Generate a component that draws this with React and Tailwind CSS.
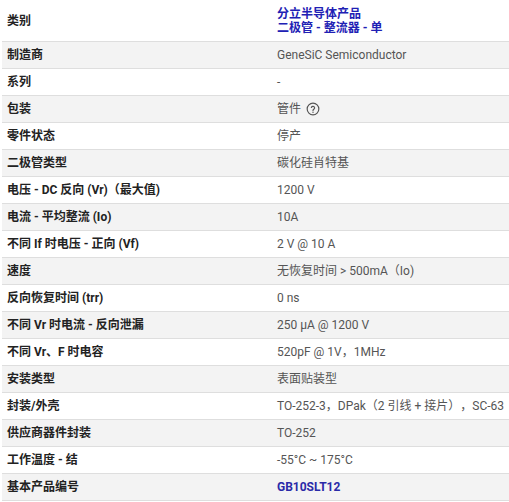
import React from 'react';

const rows = [
  { label: '制造商', value: 'GeneSiC Semiconductor' },
  { label: '系列', value: '-' },
  { label: '包装', value: '管件', help: true },
  { label: '零件状态', value: '停产' },
  { label: '二极管类型', value: '碳化硅肖特基' },
  { label: '电压 - DC 反向 (Vr)（最大值)', value: '1200 V' },
  { label: '电流 - 平均整流 (Io)', value: '10A' },
  { label: '不同 If 时电压 - 正向 (Vf)', value: '2 V @ 10 A' },
  { label: '速度', value: '无恢复时间 > 500mA（Io)' },
  { label: '反向恢复时间 (trr)', value: '0 ns' },
  { label: '不同 Vr 时电流 - 反向泄漏', value: '250 µA @ 1200 V' },
  { label: '不同 Vr、F 时电容', value: '520pF @ 1V，1MHz' },
  { label: '安装类型', value: '表面贴装型' },
  { label: '封装/外壳', value: 'TO-252-3，DPak（2 引线 + 接片），SC-63' },
  { label: '供应商器件封装', value: 'TO-252' },
  { label: '工作温度 - 结', value: '-55°C ~ 175°C' },
  { label: '基本产品编号', value: 'GB10SLT12', link: true },
];

const HelpIcon = () => (
  <svg width="14" height="14" viewBox="0 0 24 24" className="ml-[5px] text-[#555]">
    <circle cx="12" cy="12" r="10" fill="none" stroke="currentColor" strokeWidth="2" />
    <path
      d="M9.2 9.3a2.9 2.9 0 0 1 5.6 1c0 1.9-2.8 2.4-2.8 4.2"
      fill="none"
      stroke="currentColor"
      strokeWidth="2"
      strokeLinecap="round"
    />
    <circle cx="12" cy="17.6" r="1.2" fill="currentColor" />
  </svg>
);

const App = () => {
  return (
    <div
      className="w-[509px] h-[502px] overflow-hidden bg-white pl-[2px] text-[12px] [text-spacing-trim:space-all]"
      style={{ fontFamily: 'Roboto, "Noto Sans CJK SC", sans-serif' }}
    >
      <div className="flex h-[42px] items-center border-b border-[#dedede]">
        <div className="w-[275px] pl-[5px] font-bold text-[#222]">类别</div>
        <div className="flex flex-col leading-[14px] font-bold text-[#2020b4]">
          <span>分立半导体产品</span>
          <span>二极管 - 整流器 - 单</span>
        </div>
      </div>
      {rows.map((row, i) => (
        <div
          key={row.label}
          className={`flex h-[27px] items-center border-b border-[#dedede] ${
            i % 2 === 0 ? 'bg-[#f3f3f3]' : 'bg-white'
          }`}
        >
          <div className="w-[275px] shrink-0 pl-[5px] font-bold text-[#222]">{row.label}</div>
          <div className="flex items-center whitespace-nowrap">
            {row.link ? (
              <span className="font-bold text-[#2a2aa8]">{row.value}</span>
            ) : (
              <span className="text-[#555]">{row.value}</span>
            )}
            {row.help && <HelpIcon />}
          </div>
        </div>
      ))}
    </div>
  );
};

export default App;
